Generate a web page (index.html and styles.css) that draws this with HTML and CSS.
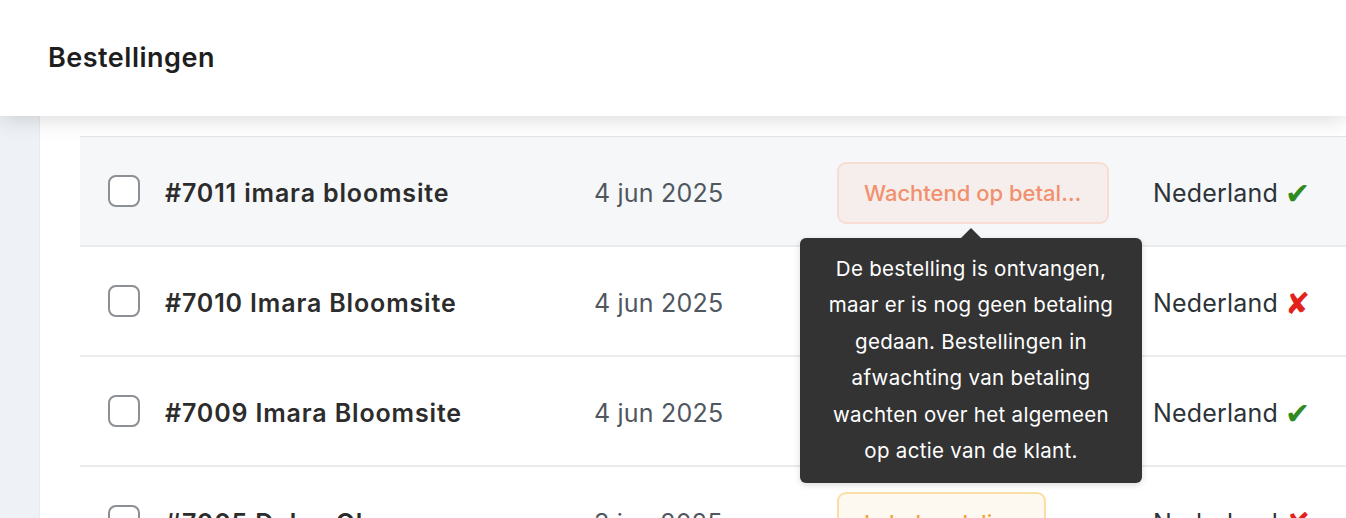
FILE: index.html
```html
<!DOCTYPE html>
<html lang="nl">
<head>
<meta charset="utf-8">
<title>Bestellingen</title>
<link rel="stylesheet" href="styles.css">
</head>
<body>
<header class="topbar">
  <h1 class="title">Bestellingen</h1>
</header>
<div class="layout">
  <aside class="sidebar"></aside>
  <main class="main">
    <div class="table">
      <div class="row row-hover">
        <span class="check"></span>
        <span class="name">#7011 imara bloomsite</span>
        <span class="date">4 jun 2025</span>
        <span class="status-cell">
          <span class="badge badge-pending">Wachtend op betaling</span>
          <span class="tooltip">De bestelling is ontvangen, maar er is nog geen betaling gedaan. Bestellingen in afwachting van betaling wachten over het algemeen op actie van de klant.</span>
        </span>
        <span class="country">Nederland <span class="ok">✔</span></span>
      </div>
      <div class="row">
        <span class="check"></span>
        <span class="name">#7010 Imara Bloomsite</span>
        <span class="date">4 jun 2025</span>
        <span class="status-cell">
          <span class="badge badge-pending">Wachtend op betaling</span>
        </span>
        <span class="country">Nederland <span class="no">✘</span></span>
      </div>
      <div class="row">
        <span class="check"></span>
        <span class="name">#7009 Imara Bloomsite</span>
        <span class="date">4 jun 2025</span>
        <span class="status-cell">
          <span class="badge badge-pending">Wachtend op betaling</span>
        </span>
        <span class="country">Nederland <span class="ok">✔</span></span>
      </div>
      <div class="row">
        <span class="check"></span>
        <span class="name">#7005 Dylan Olyvers</span>
        <span class="date">3 jun 2025</span>
        <span class="status-cell">
          <span class="badge badge-processing">In behandeling</span>
        </span>
        <span class="country">Nederland <span class="no">✘</span></span>
      </div>
    </div>
  </main>
</div>
</body>
</html>
```

FILE: styles.css
```css
* { box-sizing: border-box; }
html, body { margin: 0; padding: 0; }
body {
  font-family: Inter, "Noto Sans", "Liberation Sans", sans-serif;
  background: #ffffff;
  color: #1e1e1e;
  height: 518px;
  overflow: hidden;
}
.topbar {
  position: relative;
  z-index: 2;
  height: 116px;
  background: #ffffff;
  display: flex;
  align-items: center;
  padding-left: 48px;
  box-shadow: 0 2px 22px rgba(0, 0, 0, 0.16);
}
.title {
  margin: 0;
  font-size: 27px;
  font-weight: 600;
  letter-spacing: 0.5px;
  color: #1e1e1e;
  transform: translateY(-1px);
}
.layout {
  display: flex;
  height: 402px;
}
.sidebar {
  width: 40px;
  flex: none;
  background: #eef1f5;
  border-right: 1px solid #e8eaee;
}
.main {
  flex: 1;
  padding: 20px 0 0 40px;
  background: #ffffff;
}
.table {
  border-top: 1px solid #e3e3e3;
}
.row {
  display: grid;
  grid-template-columns: 57px 429px 243px 316px 1fr;
  align-items: center;
  height: 110px;
  padding: 3px 0 0 28px;
  border-bottom: 2px solid #ebebeb;
  font-size: 25px;
}
.row-hover { background: #f6f7f9; }
.check {
  width: 32px;
  height: 32px;
  border: 2px solid #8c8f94;
  border-radius: 8px;
  background: #ffffff;
  transform: translateY(-2px);
}
.name {
  font-weight: 600;
  color: #2c2c2c;
  letter-spacing: 0.85px;
}
.date {
  color: #50575e;
  letter-spacing: 0.2px;
}
.status-cell {
  position: relative;
  display: flex;
}
.badge {
  display: block;
  max-width: 272px;
  height: 62px;
  line-height: 58px;
  padding: 0 25px;
  border-radius: 9px;
  border: 2px solid transparent;
  font-size: 22px;
  font-weight: 500;
  letter-spacing: 0;
  white-space: nowrap;
  overflow: hidden;
  text-overflow: ellipsis;
}
.badge-pending {
  background: #f5eeec;
  border-color: #f8ddd4;
  color: #f2906d;
}
.badge-processing {
  background: #fdf9f0;
  border-color: #fbdea3;
  color: #f2a33a;
}
.tooltip {
  position: absolute;
  z-index: 3;
  top: 76px;
  left: -37px;
  width: 342px;
  padding: 13px 22px;
  background: #333333;
  color: #ffffff;
  border-radius: 6px;
  font-size: 20.5px;
  letter-spacing: 0.3px;
  line-height: 36.5px;
  text-align: center;
  box-shadow: 0 2px 6px rgba(0, 0, 0, 0.15);
}
.tooltip::before {
  content: "";
  position: absolute;
  top: -10px;
  left: 161px;
  border-left: 10px solid transparent;
  border-right: 10px solid transparent;
  border-bottom: 10px solid #333333;
}
.country {
  color: #2c3338;
  white-space: nowrap;
  letter-spacing: 0.2px;
}
.ok, .no {
  font-size: 30px;
  line-height: 1;
  vertical-align: -2px;
}
.ok { color: #2f8a1f; }
.no { color: #e3231b; }
```
